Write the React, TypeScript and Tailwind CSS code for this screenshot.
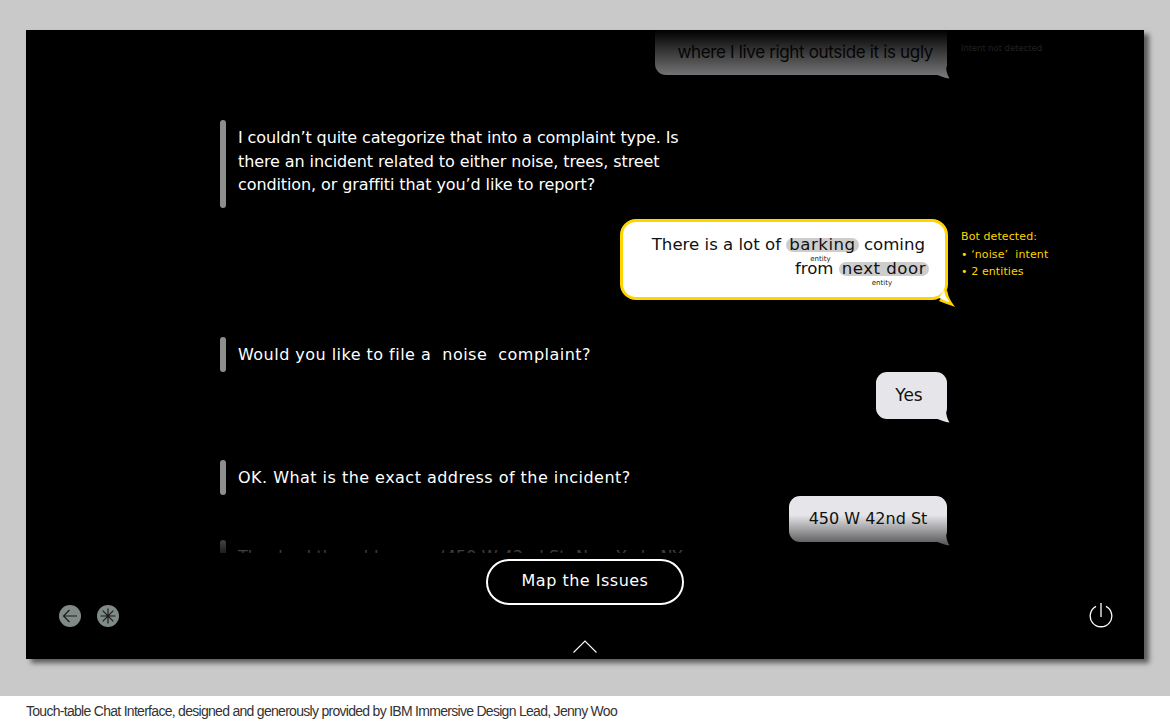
function Tail({ fill = "#e6e6ea" }: { fill?: string }) {
  return (
    <svg className="absolute right-[-3px] bottom-[-4px]" width="14" height="14" viewBox="0 0 14 14">
      <path d="M10 0 C10 5 11 10 13.5 13.5 C9 13 5 11 0 9.5 Z" fill={fill} />
    </svg>
  );
}

function BotMessage({ barClass, children }: { barClass: string; children: React.ReactNode }) {
  return (
    <div className="flex gap-[12px] pl-[194px]">
      <div className={`w-[6px] shrink-0 rounded-[3px] ${barClass}`}></div>
      <div className="flex items-center text-white">{children}</div>
    </div>
  );
}

function Entity({ word, label }: { word: string; label: string }) {
  return (
    <span className="relative inline-block rounded-[8px] bg-[#cdcdcd] px-[3px] leading-[14px] tracking-[0.5px]">
      {word}
      <span className="absolute left-0 right-0 top-[16px] pr-[4px] text-center text-[7px] leading-[10px] tracking-normal text-[#222]">{label}</span>
    </span>
  );
}

export default function App() {
  return (
    <div className="h-[719px] w-[1170px] overflow-hidden bg-white font-['DejaVu_Sans',sans-serif]">
      <div className="h-[696px] bg-[#c9c9c9] pt-[30px] pl-[26px]">
        <div className="h-[629px] w-[1118px] bg-black shadow-[5px_4px_5px_rgba(0,0,0,0.55)]">
          <div className="relative h-[523px] overflow-hidden text-[16px] tracking-[0.47px]">
            <div className="flex h-[45px] justify-end pr-[197px]">
              <div className="relative flex h-[45px] w-[292px] items-center justify-end rounded-b-[11px] bg-[#e6e6ea] pr-[14px] font-['Inter',sans-serif] text-[17px] tracking-[-0.34px] whitespace-nowrap text-[#111]">
                where I live right outside it is ugly
                <Tail />
                <div className="absolute left-full top-[11px] ml-[14px] text-[9px] tracking-[0.05px] text-[#999]">Intent not detected</div>
              </div>
            </div>

            <div className="mt-[45px]">
              <BotMessage barClass="bg-[#8e8e8e]">
                <p className="h-[88px] pt-[6px] leading-[23.5px] tracking-[-0.1px]">
                  I couldn’t quite categorize that into a complaint type. Is<br />
                  there an incident related to either noise, trees, street<br />
                  condition, or graffiti that you’d like to report?
                </p>
              </BotMessage>
            </div>

            <div className="mt-[11px] flex justify-end pr-[196px]">
              <div className="relative h-[81px] w-[328px] rounded-[16px] border-[3.5px] border-[#ffd500] bg-white pt-[11px] pr-[20px] text-right text-[16.6px] leading-[24px] tracking-normal text-[#111]">
                <svg className="absolute right-[-12px] bottom-[-11px]" width="18" height="18" viewBox="0 0 18 18">
                  <path d="M8 0 L9.5 6 C11 10 14 14 16 17 C11 15 6 13.5 0 11 Z" fill="#ffd500" />
                  <path d="M5 0 L6.5 6 C8 8.5 9 10 10.5 12 C7 11 4 9.5 0 8 Z" fill="#fff" />
                </svg>
                <div>There is a lot of <Entity word="barking" label="entity" /> coming</div>
                <div className="mr-[-4px]">from <Entity word="next door" label="entity" /></div>
                <div className="absolute left-full top-[6px] ml-[16px] whitespace-nowrap text-left text-[11px] leading-[17.5px] tracking-[0.1px] text-[#ffd500]">
                  <div>Bot detected:</div>
                  <div>• ‘noise’&nbsp; intent</div>
                  <div>• 2 entities</div>
                </div>
              </div>
            </div>

            <div className="mt-[37px]">
              <BotMessage barClass="h-[35px] bg-[#8e8e8e]">
                <p className="pt-[1px]">Would you like to file a&nbsp; noise&nbsp; complaint?</p>
              </BotMessage>
            </div>

            <div className="flex justify-end pr-[197px]">
              <div className="relative flex h-[47px] w-[71px] items-center justify-center rounded-[11px] bg-[#e6e6ea] pr-[5px] text-[17px] tracking-normal text-[#111]">
                Yes
                <Tail />
              </div>
            </div>

            <div className="mt-[41px]">
              <BotMessage barClass="h-[35px] bg-[#8e8e8e]">
                <p className="pt-[1px]">OK. What is the exact address of the incident?</p>
              </BotMessage>
            </div>

            <div className="mt-[1px] flex justify-end pr-[197px]">
              <div className="relative flex h-[46px] w-[158px] items-center justify-center rounded-[11px] bg-[#e6e6ea] tracking-normal text-[#111]">
                450 W 42nd St
                <Tail />
              </div>
            </div>

            <div className="mt-[-2px]">
              <BotMessage barClass="h-[35px] bg-[#8e8e8e]">
                <p className="pb-[2px] whitespace-nowrap tracking-[0.1px]">Thanks. I the address as ‘450 W 42nd St, New York, NY</p>
              </BotMessage>
            </div>

            <div className="absolute inset-x-0 top-0 h-[90px] bg-linear-to-b from-black to-transparent"></div>
            <div className="absolute inset-x-0 bottom-0 h-[38px] bg-linear-to-b from-transparent to-black/80"></div>
          </div>

          <div className="grid grid-cols-[1fr_auto_1fr] pt-[6px]">
            <div className="flex gap-[16px] pt-[46px] pl-[33px]">
              <svg width="22" height="22" viewBox="0 0 22 22">
                <circle cx="11" cy="11" r="11" fill="#808a87" />
                <path d="M18 11 H4.5 M10.5 5 L4.5 11 L10.5 17" fill="none" stroke="#1c1c1c" strokeWidth="1.2" />
              </svg>
              <svg width="22" height="22" viewBox="0 0 22 22">
                <circle cx="11" cy="11" r="11" fill="#808a87" />
                <path d="M11 3.5 V18.5 M3.5 11 H18.5 M5.7 5.7 L16.3 16.3 M16.3 5.7 L5.7 16.3" fill="none" stroke="#1c1c1c" strokeWidth="1.2" />
              </svg>
            </div>
            <button className="flex h-[46px] w-[198px] items-center justify-center rounded-full border-2 border-white bg-black pb-[2px] text-[16px] tracking-[0.5px] text-white">
              Map the Issues
            </button>
            <div className="flex justify-end pt-[43px] pr-[31px]">
              <svg width="24" height="26" viewBox="0 0 24 26">
                <path d="M7 4.4 A10.8 10.8 0 1 0 17 4.4 M12 1 V15" fill="none" stroke="#fff" strokeWidth="1.3" />
              </svg>
            </div>
          </div>
          <div className="mt-[12px] flex justify-center">
            <svg width="24" height="13" viewBox="0 0 24 13">
              <path d="M0.5 12.5 L12 1 L23.5 12.5" fill="none" stroke="#fff" strokeWidth="1.1" />
            </svg>
          </div>
        </div>
      </div>
      <p className="pt-[7px] pl-[26px] font-['Liberation_Sans',sans-serif] text-[14px] leading-[16px] tracking-[-0.71px] text-[#333]">
        Touch-table Chat Interface, designed and generously provided by IBM Immersive Design Lead, Jenny Woo
      </p>
    </div>
  );
}
